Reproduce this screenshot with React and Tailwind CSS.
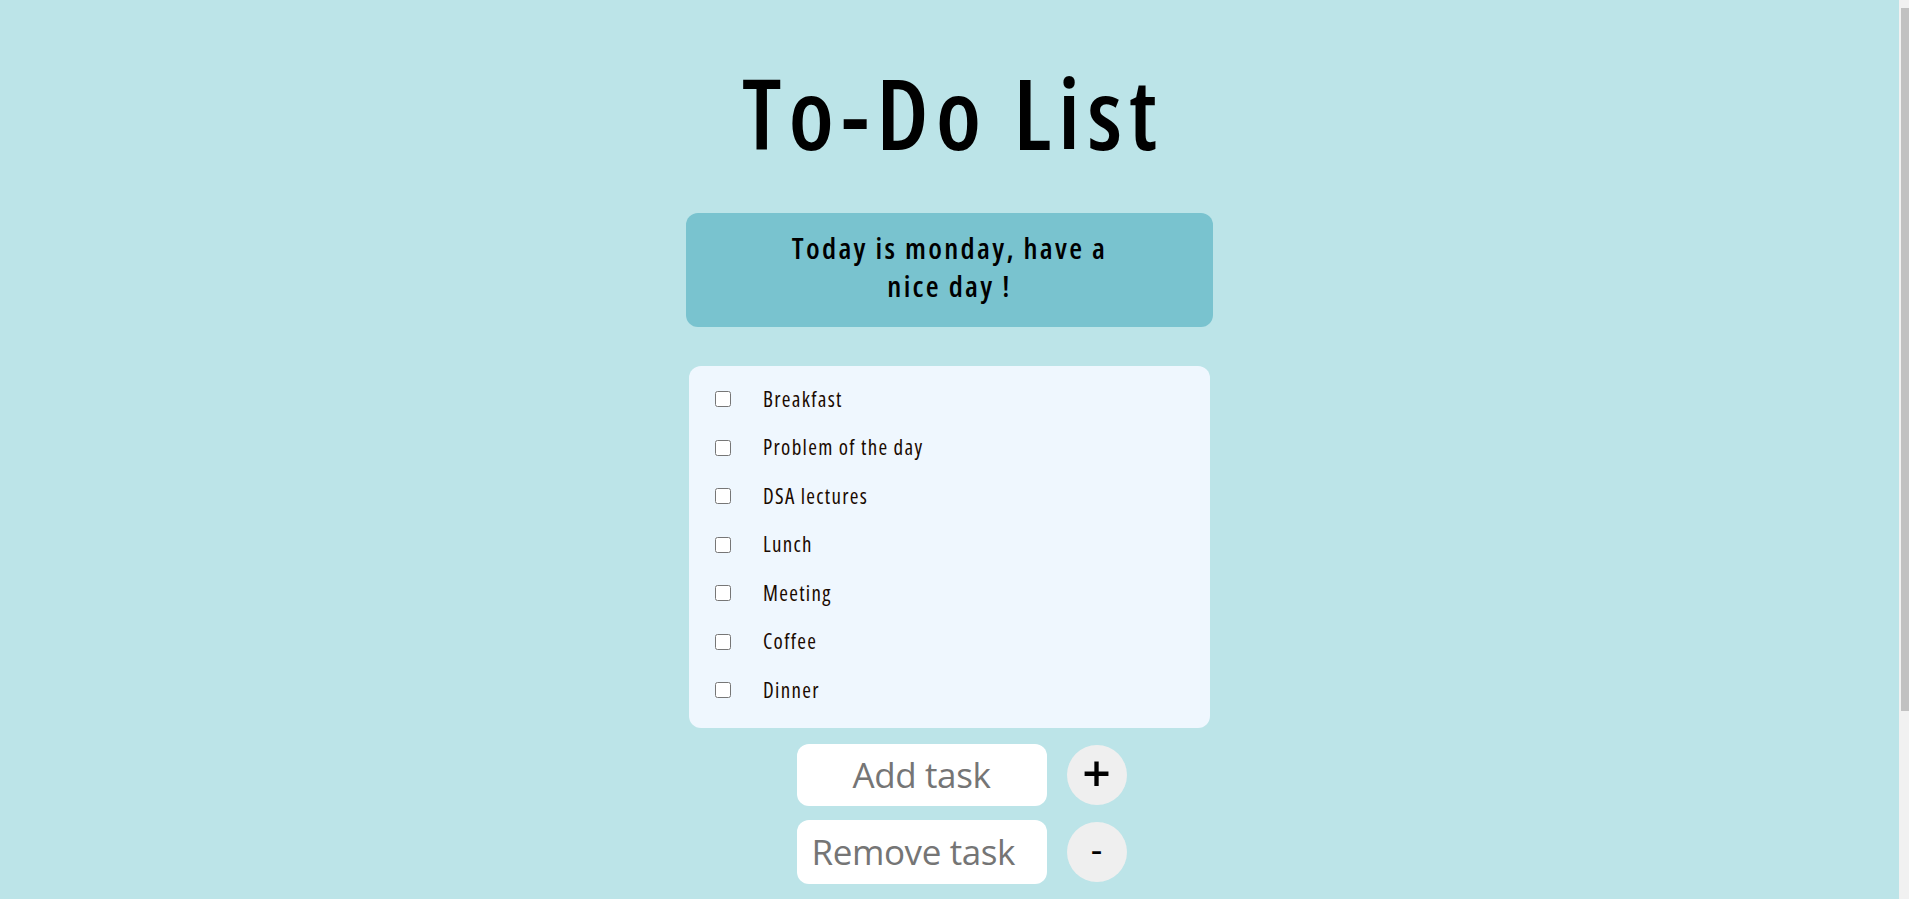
import React, { useState } from 'react';

const tasks = ['Breakfast', 'Problem of the day', 'DSA lectures', 'Lunch', 'Meeting', 'Coffee', 'Dinner'];

export default function App() {
  const [items, setItems] = useState(tasks);
  const [newTask, setNewTask] = useState('');
  const [oldTask, setOldTask] = useState('');

  const addTask = () => {
    if (!newTask.trim()) return;
    setItems([...items, newTask.trim()]);
    setNewTask('');
  };

  const removeTask = () => {
    setItems(items.filter((t) => t !== oldTask.trim()));
    setOldTask('');
  };

  return (
    <div className="min-h-screen bg-[#bce4e8] pb-[268px] pr-[10px] font-['Open_Sans',sans-serif]">
      <h1 className="pt-[63px] pl-[7px] text-center text-[98px] font-semibold leading-none tracking-[7px] text-black [font-stretch:75%]">
        To-Do List
      </h1>

      <div className="mt-[52px] flex justify-center">
        <div className="flex h-[114px] w-[527px] items-center justify-center rounded-[12px] bg-[#79c3cf] pb-[6px]">
          <p className="w-[345px] text-center text-[29.5px] font-semibold leading-[38px] tracking-[2.3px] text-black [font-stretch:75%]">
            Today is monday, have a nice day !
          </p>
        </div>
      </div>

      <div className="mt-[39px] flex justify-center">
        <ul className="w-[521px] rounded-[12px] bg-[#eff7fe] pb-[13px] pl-[26px] pt-[9px]">
          {items.map((task) => (
            <li key={task} className="flex h-[48.5px] items-center">
              <input type="checkbox" className="h-4 w-4" />
              <span className="ml-[32px] text-[21px] font-medium tracking-[1.3px] text-[#1a0a00] [font-stretch:75%]">{task}</span>
            </li>
          ))}
        </ul>
      </div>

      <div className="mt-[16px] flex flex-col items-center gap-[14px] pl-[24px]">
        <div className="flex items-center gap-[20px]">
          <input
            type="text"
            placeholder="Add task"
            value={newTask}
            onChange={(e) => setNewTask(e.target.value)}
            className="h-[62px] w-[250px] rounded-[12px] bg-white px-[15px] text-center text-[35px] tracking-[-0.4px] outline-none [font-stretch:96%] placeholder:text-[#757575]"
          />
          <button
            onClick={addTask}
            className="flex h-[60px] w-[60px] items-center justify-center rounded-full bg-[#efefef] pb-[4px] text-[50px] font-semibold leading-none text-black"
          >
            +
          </button>
        </div>
        <div className="flex items-center gap-[20px]">
          <input
            type="text"
            placeholder="Remove task"
            value={oldTask}
            onChange={(e) => setOldTask(e.target.value)}
            className="h-[64px] w-[250px] rounded-[12px] bg-white px-[15px] text-[35px] tracking-[-0.4px] outline-none [font-stretch:96%] placeholder:text-[#757575]"
          />
          <button
            onClick={removeTask}
            className="flex h-[60px] w-[60px] items-center justify-center rounded-full bg-[#efefef] pb-[4px] text-[36px] leading-none text-black"
          >
            -
          </button>
        </div>
      </div>

      <div className="fixed right-0 top-0 h-screen w-[10px] bg-[#f1f1f1] pl-[2px] pt-[8px]">
        <div className="h-[703px] w-[8px] bg-[#c1c1c1]" />
      </div>
    </div>
  );
}
